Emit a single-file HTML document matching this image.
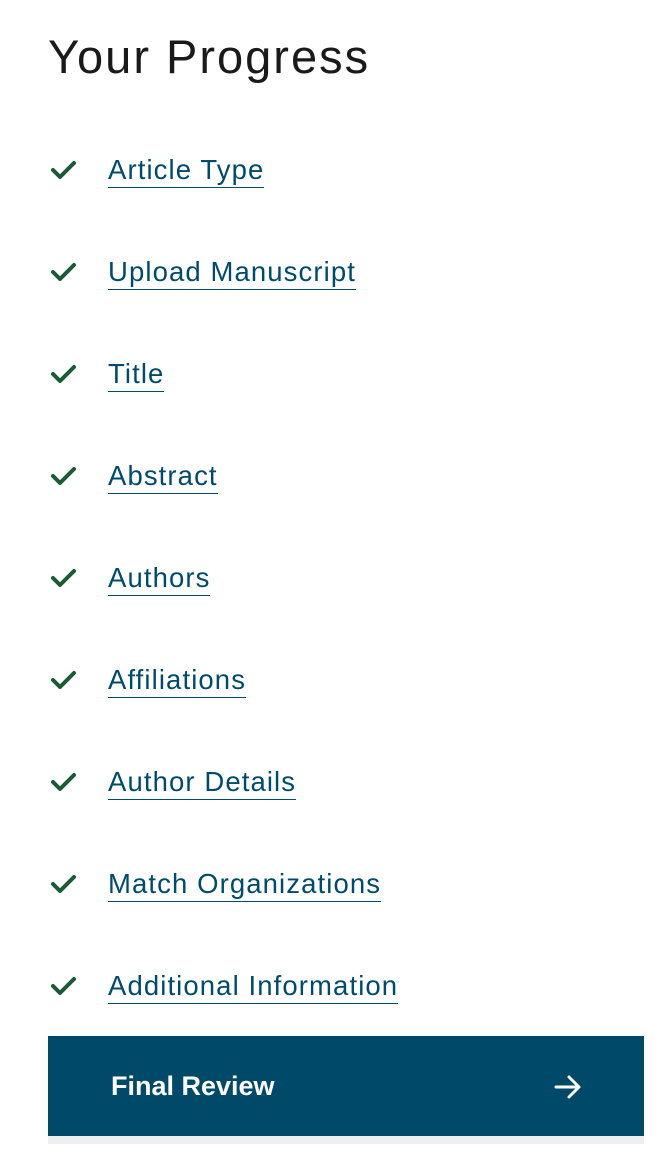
<!DOCTYPE html>
<html><head><meta charset="utf-8"><style>
body{margin:0;background:#fff;font-family:"Liberation Sans",sans-serif;width:662px;height:1158px;overflow:hidden;position:relative}
h1{position:absolute;left:48px;top:24px;margin:0;font-weight:normal;font-size:47px;letter-spacing:2px;color:#1a1a1a;line-height:66px}
.item{position:absolute;left:48px;height:40px;width:600px}
.item svg{position:absolute;left:2px;top:0px}
.item a{position:absolute;left:60px;top:-5px;font-size:27.5px;letter-spacing:1.1px;color:#004a6b;text-decoration:none;border-bottom:1.5px solid #004a6b;line-height:33px;padding-bottom:1px;white-space:nowrap}
.btn{position:absolute;left:48px;top:1036px;width:596px;height:100px;background:#014968}
.btn span{position:absolute;left:63px;top:33px;font-size:27px;font-weight:bold;color:#fff;line-height:34px}
.btn svg{position:absolute;left:506px;top:38px}
.shadow{position:absolute;left:48px;top:1136px;width:596px;height:8px;background:#efefef}
</style></head><body>
<h1>Your Progress</h1>
<div class="item" style="top:158px"><svg width="28" height="24" viewBox="0 0 28 24"><path d="M3 12 L10 19 L24 5" fill="none" stroke="#1a5a35" stroke-width="4" stroke-linecap="round" stroke-linejoin="round"/></svg><a>Article Type</a></div>
<div class="item" style="top:260px"><svg width="28" height="24" viewBox="0 0 28 24"><path d="M3 12 L10 19 L24 5" fill="none" stroke="#1a5a35" stroke-width="4" stroke-linecap="round" stroke-linejoin="round"/></svg><a>Upload Manuscript</a></div>
<div class="item" style="top:362px"><svg width="28" height="24" viewBox="0 0 28 24"><path d="M3 12 L10 19 L24 5" fill="none" stroke="#1a5a35" stroke-width="4" stroke-linecap="round" stroke-linejoin="round"/></svg><a>Title</a></div>
<div class="item" style="top:464px"><svg width="28" height="24" viewBox="0 0 28 24"><path d="M3 12 L10 19 L24 5" fill="none" stroke="#1a5a35" stroke-width="4" stroke-linecap="round" stroke-linejoin="round"/></svg><a>Abstract</a></div>
<div class="item" style="top:566px"><svg width="28" height="24" viewBox="0 0 28 24"><path d="M3 12 L10 19 L24 5" fill="none" stroke="#1a5a35" stroke-width="4" stroke-linecap="round" stroke-linejoin="round"/></svg><a>Authors</a></div>
<div class="item" style="top:668px"><svg width="28" height="24" viewBox="0 0 28 24"><path d="M3 12 L10 19 L24 5" fill="none" stroke="#1a5a35" stroke-width="4" stroke-linecap="round" stroke-linejoin="round"/></svg><a>Affiliations</a></div>
<div class="item" style="top:770px"><svg width="28" height="24" viewBox="0 0 28 24"><path d="M3 12 L10 19 L24 5" fill="none" stroke="#1a5a35" stroke-width="4" stroke-linecap="round" stroke-linejoin="round"/></svg><a>Author Details</a></div>
<div class="item" style="top:872px"><svg width="28" height="24" viewBox="0 0 28 24"><path d="M3 12 L10 19 L24 5" fill="none" stroke="#1a5a35" stroke-width="4" stroke-linecap="round" stroke-linejoin="round"/></svg><a>Match Organizations</a></div>
<div class="item" style="top:974px"><svg width="28" height="24" viewBox="0 0 28 24"><path d="M3 12 L10 19 L24 5" fill="none" stroke="#1a5a35" stroke-width="4" stroke-linecap="round" stroke-linejoin="round"/></svg><a>Additional Information</a></div>
<div class="btn"><span>Final Review</span><svg width="28" height="26" viewBox="0 0 28 26"><path d="M2 13 H24 M15 3 L25 13 L15 23" fill="none" stroke="#fff" stroke-width="3" stroke-linecap="round" stroke-linejoin="round"/></svg></div>
<div class="shadow"></div>
</body></html>
